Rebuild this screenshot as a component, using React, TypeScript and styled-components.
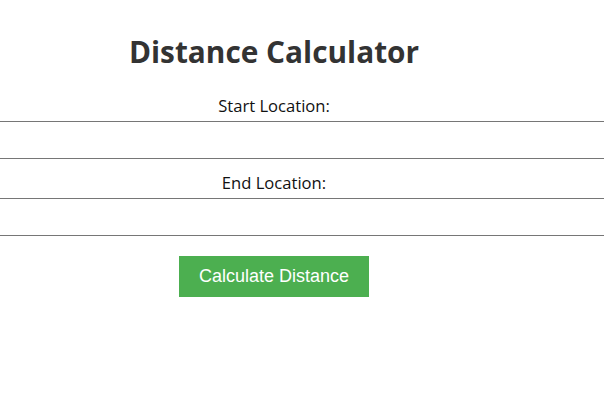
import styled, { createGlobalStyle } from "styled-components";

const Global = createGlobalStyle`
  html, body {
    margin: 0;
    padding: 0;
    background: #ffffff;
    overflow: hidden;
  }
  body {
    font-family: "Open Sans", "Noto Sans", sans-serif;
  }
`;

function App() {
  return (
    <>
      <Global />
      <Page>
        <Title>Distance Calculator</Title>
        <Form onSubmit={(e) => e.preventDefault()}>
          <Label htmlFor="start">Start Location:</Label>
          <Field id="start" type="text" />
          <Label htmlFor="end">End Location:</Label>
          <Field id="end" type="text" />
          <Button type="submit">Calculate Distance</Button>
        </Form>
      </Page>
    </>
  );
}
export default App;

const Page = styled.div`
  width: 548px;
  display: flex;
  flex-direction: column;
  align-items: center;
  padding-top: 33px;
`;

const Title = styled.h1`
  font-family: "Open Sans", "Noto Sans", sans-serif;
  font-size: 29.8px;
  font-weight: 700;
  line-height: 38px;
  color: #333333;
  margin: 0 0 24px 0;
`;

const Form = styled.form`
  display: flex;
  flex-direction: column;
  align-items: center;
  width: 100%;
`;

const Label = styled.label`
  font-family: "Open Sans", "Noto Sans", sans-serif;
  font-size: 16.6px;
  line-height: 21px;
  color: #111111;
  margin-bottom: 5px;
`;

const Field = styled.input`
  align-self: flex-start;
  box-sizing: border-box;
  width: 620px;
  height: 38px;
  margin: 0 0 13px -8px;
  border: 1px solid #767676;
  background: #ffffff;
  font-size: 16px;
  padding: 8px;
  outline: none;
`;

const Button = styled.button`
  margin-top: 7px;
  width: 190px;
  height: 41px;
  border: none;
  background: #4caf50;
  color: #ffffff;
  font-family: "Liberation Sans", Arial, sans-serif;
  font-size: 18px;
  cursor: pointer;
`;
